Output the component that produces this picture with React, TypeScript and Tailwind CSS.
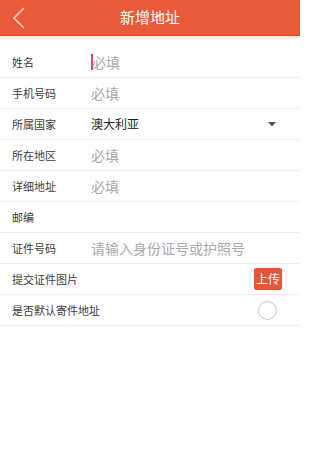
import React from "react";

const font = { fontFamily: '"Noto Sans CJK SC", "Noto Sans", sans-serif' };

function Row({ label, children }: { label: string; children?: React.ReactNode }) {
  return (
    <div className="flex items-center h-[31px] border-b border-[#efefef] pl-3 pr-[18px]">
      <div className="w-[79px] shrink-0 text-[11px] text-[#3a3a3a] whitespace-nowrap">{label}</div>
      <div className="flex-1 flex items-center min-w-0">{children}</div>
    </div>
  );
}

const Placeholder = ({ text }: { text: string }) => (
  <span className="text-[14px] text-[#a8a8ae] whitespace-nowrap">{text}</span>
);

export default function App() {
  return (
    <div className="w-[300px] h-[450px] bg-white overflow-hidden" style={font}>
      <div className="relative h-[36px] bg-[#e95a3a] border-b border-[#cf4b2d] flex items-center justify-center">
        <svg className="absolute left-[12px] top-[7px]" width="14" height="22" viewBox="0 0 14 22">
          <polyline points="12,1 2,11 12,21" fill="none" stroke="#f9d2c4" strokeWidth="1.6" />
        </svg>
        <span className="text-[15px] text-white">新增地址</span>
      </div>
      <div className="h-[3px] bg-[#fbefea]" />
      <div className="mt-[8px]">
        <Row label="姓名">
          <span className="w-[2px] h-[16px] bg-[#d8407e] mr-[-1px]" />
          <Placeholder text="必填" />
        </Row>
        <Row label="手机号码">
          <Placeholder text="必填" />
        </Row>
        <Row label="所属国家">
          <span className="text-[12px] text-[#222] flex-1">澳大利亚</span>
          <svg width="8" height="5" viewBox="0 0 8 5" className="mr-[6px]">
            <polygon points="0,0 8,0 4,4.5" fill="#555" />
          </svg>
        </Row>
        <Row label="所在地区">
          <Placeholder text="必填" />
        </Row>
        <Row label="详细地址">
          <Placeholder text="必填" />
        </Row>
        <Row label="邮编" />
        <Row label="证件号码">
          <Placeholder text="请输入身份证号或护照号" />
        </Row>
        <Row label="提交证件图片">
          <div className="flex-1" />
          <button className="w-[28px] h-[22px] bg-[#e4553a] text-white text-[12px] rounded-[2px] flex items-center justify-center leading-none">
            上传
          </button>
        </Row>
        <Row label="是否默认寄件地址">
          <div className="flex-1" />
          <span className="w-[19px] h-[19px] rounded-full border border-[#c4c4c4] mr-[5px]" />
        </Row>
      </div>
    </div>
  );
}
